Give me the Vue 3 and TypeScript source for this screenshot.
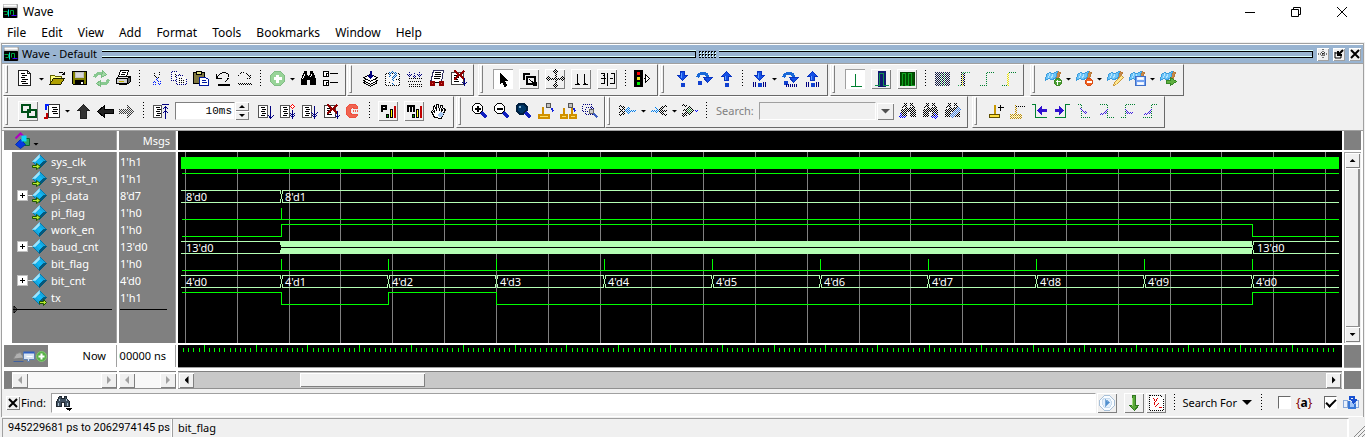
<script setup lang="ts">
import { h, ref } from 'vue'

// d, fill, stroke, stroke width, dash
type Shape = [string, string, string?, number?, string?]
type Kind = 'tool' | 'raised' | 'pressed' | 'arrow' | 'sep' | 'step' | 'search'
interface Item { kind: Kind; icon?: string; label?: string; off?: boolean }
interface Group { gap: string; items: Item[] }

const K = '#000'
const N = 'none'
const NAVY = '#000080'
const BLUE = '#1450e6'
const GREEN = '#008030'

const lens: Shape[] = [
  ['M12 11L17 16', N, '#1020c0', 3],
]
const flag: Shape[] = [
  ['M14 2L17 3L14 12H12Z', '#c88848', '#b87838'],
  ['M3 5L6 3L9 4L14 2L12 9L8 10L5 9L2 11Z', '#6cc4f8', '#3c9cdc'],
  ['M6 4L5 9M9 5L8 9', N, '#b4e4ff'],
]
const arrowDown: Shape[] = [
  ['M8 2H12V6H15L10 11L5 6H8Z', BLUE, '#0a34c0'],
  ['M9 3v5', N, '#60a0ff'],
]
const arrowUp: Shape[] = [
  ['M10 2L15 7H12V11H8V7H5Z', BLUE, '#0a34c0'],
  ['M9 6v4', N, '#60a0ff'],
]
const ball: Shape[] = [['M9 14h2v2h-2Z', '#3c78ff', '#1040d0', 2]]
const hop: Shape[] = [
  ['M3 8C5 2 13 2 13 8', N, '#1868d8', 3],
  ['M9 8H18L13 13Z', BLUE, '#0a34c0'],
  ['M4 12h2v2h-2Z', '#3c78ff', '#1040d0', 2],
]
const bars: Shape[] = [['M4 12v5M6 12v5M14 12v5M16 12v5', N, NAVY]]
const binoc: Shape[] = [
  ['M6 2H8V5L9 7H11L12 5V2H14L17 10V15H12V10H8V15H3V10Z', K, K],
  ['M6 5L4 10M13 5L12 8', N, '#fff'],
]

const icons: Record<string, Shape[]> = {
  doc: [['M2 1H11L14 4V16H2Z', '#fff', '#222'], ['M11 1V4H14', N, '#222'], ['M4 4h4M5 6h5M4 8h4M5 10h6M4 12h5M5 14h6', N, K]],
  folder: [
    ['M3 14V6H7L8 7H14V9', '#ffff80', '#606000'],
    ['M2 15L6 9H17L13 15Z', '#b0a000', '#202000'],
    ['M11 4Q14 1 17 5M17 2V5H14', N, K],
  ],
  save: [['M3 2H17V15H4L3 14Z', '#808000', K], ['M6 3H14V8H6Z', '#d8d8d8', '#c0c0c0'], ['M6 11H14V15H6Z', K, K], ['M12 12v2', N, '#fff', 2]],
  refresh: [
    ['M3 8Q5 3 11 4M17 10Q15 16 9 14', N, '#88c890', 3],
    ['M11 1L15 5L10 8ZM9 11L5 14L9 17Z', '#a0d8a4', '#78bc80'],
  ],
  print: [
    ['M7 1H15L13 7H5Z', '#fff', K], ['M8 3h4M7 5h4', N, K],
    ['M3 9L5 7H16L14 9Z', '#e0e0e0', K], ['M3 9H14V14H3Z', '#d0d0d0', K],
    ['M14 9L17 7V12L14 15', '#606060', K], ['M5 12h5', N, '#c0b000'], ['M5 14h8', N, K, 2],
  ],
  cut: [['M8 2V6L12 11M13 2V6L9 11', N, K], ['M7 12h2v3h-2ZM12 12h2v3h-2Z', N, '#0020ff'], ['M10 8v3', N, '#0020ff', 2]],
  copy: [['M3 2H9L11 4V11H3Z', '#fff', NAVY], ['M8 6H15L18 9V15H8Z', '#fff', NAVY], ['M5 5h3M5 7h3M10 9h4M10 11h6M10 13h6', N, K]],
  paste: [
    ['M3 3H14V14H3Z', '#807840', K], ['M6 2H11V5H6Z', '#e0e080', K],
    ['M9 8H15L18 10V16H9Z', '#fff', '#0018a0'], ['M11 11h4M11 13h5', N, '#0018a0'],
  ],
  undo: [['M4 4V9H9M4 9Q7 3 12 3Q17 4 16 8Q15 11 13 12', N, K], ['M5 15h12', N, K, 2]],
  redo: [['M16 4V9H11M16 9Q13 3 8 3Q3 4 4 8', N, K], ['M3 14h14', N, K, 2]],
  add: [['M7 2H13L17 6V12L13 16H7L3 12V6Z', '#98d498', '#80bc84'], ['M10 5v8M6 9h8', N, '#fff', 3]],
  binoc,
  tree: [['M3 2H8V7H3ZM3 11H8V16H3Z', '#fff', K], ['M5 4h2M6 3v3M5 13h2M6 12v3M9 4h8M9 13h8', N, K]],
  stack: [
    ['M3 11L10 8L17 11L10 15Z', '#fff', K], ['M3 8L10 5L17 8L10 12Z', '#fff', K],
    ['M3 13L10 17L17 13', N, K], ['M10 1V8M8 6L10 8L12 6', N, NAVY, 2],
  ],
  help: [['M3 4H17V16H3Z', '#fff', K], ['M7 7V4Q10 1 13 4V6L10 9V11M10 13v2', N, '#0060c0', 2], ['M5 13h3M13 10h3', N, K]],
  film: [['M3 9H17M3 12H17M3 15H17M3 17H17', N, K], ['M5 2v5M10 2v5M15 2v5M3 5l2 3 2-3M8 5l2 3 2-3M13 5l2 3 2-3', N, NAVY]],
  truck: [
    ['M7 1H17L15 13H4Z', '#fff', '#303060'], ['M8 3h6M8 5h6M7 7h7M7 9h6', N, K],
    ['M4 12h3v3h-3ZM13 12h3v3h-3Z', '#f04040', '#900000', 2], ['M8 13h4', N, K],
  ],
  kill: [['M3 3H15V15H3Z', '#fff', '#444'], ['M5 6h4M5 8h5M5 10h4M5 12h5', N, K], ['M6 1L16 10M16 1L6 10', N, '#900000', 2], ['M16 8v8M14 13l2 2 2-2', N, NAVY]],
  cursor: [['M7 4V14L9 12L11 17L13 16L11 11H14Z', K, K]],
  boxsel: [['M4 10V4H10', N, K, 2], ['M7 7H15V14H7Z', N, K, 2], ['M10 10L17 16M17 12V16H13', N, K]],
  pan: [['M10 1V17M2 9H18M8 3L10 1L12 3M8 15L10 17L12 15M4 7L2 9L4 11M16 7L18 9L16 11', N, K, 2]],
  twocur: [['M6 4V15M13 4V15M3 15H8M11 15H16', N, K], ['M6 13v2M13 13v2', N, K, 2]],
  editw: [['M3 4H7V14H3M3 9H8M10 3V16M13 4H17V14H12M5 6h2M12 9h3', N, K]],
  traffic: [
    ['M2 1H10V17H2Z', K, K], ['M5 3h2v2h-2Z', '#f00', '#f00'], ['M5 8h2v2h-2Z', '#e8e020', '#e8e020'], ['M5 13h2v2h-2Z', '#0e0', '#0e0'],
    ['M13 5V13L17 9Z', '#fff', K], ['M11 9h2', N, K],
  ],
  stepdown: [...arrowDown, ...ball],
  stepover: hop,
  stepup: [...arrowUp, ...ball],
  barsdown: [...arrowDown, ...ball, ...bars],
  barsover: [...hop, ['M5 16h12', N, NAVY, 3, '1 1']],
  barsup: [...arrowUp, ...ball, ...bars],
  wave1: [['M10 4V17M5 17H16', N, GREEN]],
  wave2: [['M7 2H14V17H7Z', '#101870', '#101870'], ['M3 16H8V4H12V16H17', N, '#109050']],
  wave3: [['M3 3H17V16H3Z', '#005000', '#004000'], ['M3 16H5V4H8V16H11V4H14V16H17', N, '#10a020']],
  wavea: [['M3 3H17V16H3Z', '#101840', '#101840'], ['M9 3V16M12 3V16', N, '#20a050']],
  waveb: [['M7 3H10V16H7Z', '#101870', K], ['M3 16H8V3H16', N, '#20a050'], ['M8 4v12', N, '#e0e000', 1]],
  wavec: [['M3 16H10V3H17', N, GREEN]],
  waved: [['M3 16H9M10 3H17', N, GREEN], ['M9 3v13', N, '#f0e800', 2]],
  bmadd: [...flag, ['M13 9H16L18 11V14L16 16H13L11 14V11Z', '#48a030', '#408828'], ['M14 10v5M12 12h5', N, '#fff']],
  bmdel: [...flag, ['M13 9H16L18 11V14L16 16H13L11 14V11Z', '#f06020', '#d84c14'], ['M12 12h5', N, '#fff', 2]],
  bmedit: [...flag, ['M16 6L18 8L11 15L8 16L9 13Z', '#ffe890', '#c89840']],
  bmsave: [...flag, ['M8 7H18V16H8Z', '#70a0f0', '#4070c8'], ['M10 8h6v2h-6ZM10 13h6v2h-6Z', '#fff', '#e8f0ff']],
  bmgo: [...flag, ['M8 11H12V8L18 12L12 16V14H8Z', '#60b040', '#388828']],
  link: [['M3 3H11V10H3Z', N, '#005018', 2], ['M9 8H17V15H9Z', N, '#005018', 2]],
  waveform: [['M6 3H17V16H6Z', '#fff', '#333'], ['M9 6h5M10 8h5M9 10h5M10 12h5', N, K], ['M3 8V3H6', N, '#0020ff', 2], ['M1 16H4V11', N, '#c00000', 2]],
  up: [['M10 3L16 9H13V17H7V9H4Z', '#333', '#222']],
  left: [['M2 10L9 4V8H18V12H9V16Z', '#222', K]],
  right: [['M17 10L10 4V8H2V12H10V16Z', '#444', '#333']],
  top: [['M3 4H11V16H3Z', '#fff', '#555'], ['M5 6h4M6 8h4M5 10h4M6 12h4M5 14h4', N, K], ['M11 3h7M15 4v13M12 8l3-3 3 3M12 12l3-3 3 3', N, NAVY]],
  run: [['M3 4H12V16H3Z', '#fff', '#555'], ['M5 6h4M6 8h4M5 10h4M6 12h4M5 14h4', N, K], ['M15 4v13M13 14l2 3 3-3', N, NAVY]],
  runc: [['M3 4H12V16H3Z', '#fff', '#555'], ['M5 6h4M6 8h4M5 10h4M6 12h4M5 14h4', N, K], ['M15 8v9M13 14l2 2 2-2M13 12l2 2 2-2', N, NAVY], ['M15 3l2 2-2 2-2-2Z', '#fff', '#f00']],
  runall: [['M3 4H12V16H3Z', '#fff', '#555'], ['M5 6h4M6 8h4M5 10h4M6 12h4M5 14h4', N, K], ['M15 4v13M13 14l2 2 2-2M12 11l3 3 3-3', N, NAVY]],
  break: [['M3 4H14V16H3Z', '#fff', '#444'], ['M5 7h4M5 9h5M5 11h4M5 13h5', N, K], ['M6 3L16 12M16 3L6 12', N, '#900000', 2], ['M16 9v8M14 14l2 2 2-2', N, NAVY]],
  stop: [['M6 3H12L14 5V7H11L9 6L7 8V12L9 13H14V14L12 16H6L3 13V6Z', '#f06450', '#f05040'], ['M9 9H14', N, '#f06450', 2, '1 1']],
  perf: [['M3 10V4H7V7H4', N, K, 2], ['M8 13h2v3h-2Z', '#0a0', K], ['M12 8h2v8h-2Z', '#ff0', K], ['M16 5h1v11h-1Z', '#e00000', '#c00000']],
  mem: [['M3 10V4H9V10M6 4V10', N, K, 2], ['M8 13h2v3h-2Z', '#0a0', K], ['M12 8h2v8h-2Z', '#ff0', K], ['M16 5h1v11h-1Z', '#e00000', '#c00000']],
  hand: [
    ['M6 16L3 10L4 9L6 11L5 5L6 4L8 9L8 3L10 3L11 9L12 4L14 4L13 10L15 7L17 8L14 14L13 17Z', '#fff', K],
    ['M11 15L14 11', N, '#a8c8f0', 4],
  ],
  zoomin: [['M6 2H10L13 5V9L10 12H6L3 9V5Z', '#fff', K], ['M5 7h6M8 4v6', N, K, 2], ...lens],
  zoomout: [['M6 2H10L13 5V9L10 12H6L3 9V5Z', '#fff', K], ['M5 7h6', N, K, 2], ...lens],
  zoomfull: [['M6 2H10L13 5V9L10 12H6L3 9V5Z', '#003868', '#002040', 2], ['M5 5h2', N, '#80b0d0', 2], ...lens],
  zoomcur: [['M7 5V12', N, '#d09000', 2], ['M3 13H13V16H3Z', '#ffe060', '#d09000', 2], ['M11 2h4v4h-4Z', '#c0c0c0', '#555'], ['M16 7l2 3', N, '#1020e0', 2]],
  zoomtwo: [['M6 6V12M14 6V12', N, '#d09000', 2], ['M3 13H9V16H3ZM12 13H18V16H12Z', '#ffe060', '#d09000', 2], ['M11 2h4v4h-4Z', '#c0c0c0', '#555'], ['M16 7l2 3', N, '#1020e0', 2]],
  zoomsel: [['M3 3H12V10H3Z', N, NAVY, 1, '1 1'], ['M6 6H14V13H6Z', N, NAVY, 1, '1 1'], ['M10 8h4v4h-4Z', '#ccc', '#666'], ['M14 12l4 4', N, '#4060c0', 2]],
  mergeA: [['M1 4L5 6L7 9L5 12L1 14M1 7l3 2M1 11l3-2', N, K, 2], ['M8 9h9M11 6L8 9l3 3', N, '#0080f0', 2]],
  mergeB: [['M17 4L13 6L10 9L13 12L17 14M10 9h7', N, K, 2], ['M1 9h8M6 6l3 3-3 3', N, '#0080f0', 2]],
  mergeC: [['M2 3L6 5M2 8h4M2 13L6 11M2 15l4-2', N, K, 2], ['M9 5L13 9L9 13L5 9Z', '#208030', K], ['M14 9h3', N, '#00f', 2]],
  findprev: [...binoc, ['M1 15H7M3 12L1 15L3 17', N, '#00f', 2]],
  findnext: [...binoc, ['M10 15H17M14 12L17 15L14 17', N, '#00f', 2]],
  findopt: [...binoc, ['M8 16L17 7', N, '#4080e0', 3]],
  curadd: [['M9 3V12', N, '#c89800', 2], ['M4 13H14V16H4Z', '#ffe040', '#605000'], ['M12 6h6M15 3v6', N, K]],
  curdel: [['M8 3V12M3 13H13V16H3Z', '#ffe040', '#c09000', 2], ['M8 5h9', N, K]],
  prevedge: [['M2 3H6V16H17', N, GREEN], ['M11 9h6', N, '#3010d0', 3], ['M12 5L8 9l4 4Z', '#3010d0', '#3010d0']],
  nextedge: [['M18 3H14V16H3', N, GREEN], ['M3 9h6', N, '#3010d0', 3], ['M8 5l4 4-4 4Z', '#3010d0', '#3010d0']],
  fallprev: [['M3 3H8V16H17', N, GREEN], ['M7 7l3 3 4 2', N, '#4020e0', 2]],
  fallnext: [['M3 3H12V16H18', N, GREEN], ['M12 8l-2 3-5 2', N, '#4020e0', 2]],
  riseprev: [['M3 16H8V3H17', N, GREEN], ['M8 8l2 3 5 1', N, '#4020e0', 2]],
  risenext: [['M3 16H12V3H17', N, GREEN], ['M12 8l-2 3-5 2', N, '#4020e0', 2]],
  app: [['M0 0H14V13H0Z', '#c0c0c0', '#999'], ['M0 4H13V13H0Z', K, K], ['M0 1H13', N, '#fff', 2], ['M0 7H4V10H1M7 10V6H10V11H12', N, '#00a040'], ['M5 5V12', N, '#0dd'], ['M8 11h5', N, '#40f']],
  clear: [['M3 2H14L17 5V17H3Z', '#fff', K, 1, '1 1'], ['M7 5l2 3 2-3M8 8v3M12 10l-4 4M12 14h3', N, '#e00000']],
  go: [['M7 2H12L17 7V12L12 17H7L2 12V7Z', '#f8fcff', '#a8c0d8'], ['M6 5H12L14 8V11L12 14H7L5 11V7Z', '#e4f0fc', '#c8dcf0'], ['M8 6L12 9L8 13Z', '#5090d0', '#78a8d8']],
  down: [['M8 2H11V12H14L10 17L5 12H8Z', '#58a838', '#307820'], ['M8 4v8', N, '#a0d880']],
  find: [
    ['M6 3H8V5H11V3H13V5L16 8V13H11V9H8V13H3V8Z', '#405060', '#202830'],
    ['M6 5v2M13 5v2M5 9v3M14 9v3', N, '#a8c0d0'], ['M13 15h5l-2 2Z', K, K],
  ],
  wrap: [['M2 7H6V14H2ZM14 7H17V14H14Z', '#e8f0fc', '#88a8d8'], ['M7 7V14H13V10', '#a0c4f8', '#3878d8', 2], ['M8 6V3H12V8M10 6l2 3 3-3', N, '#1850d0', 2]],
  shapes: [
    ['M2 6L7 1L10 4', N, '#b000c0', 2], ['M10 6H16V13H10Z', '#30a060', '#106030'],
    ['M2 12L7 7L12 12L7 16Z', '#0838e0', '#0030b0'], ['M9 4h3v4h-3Z', '#10d8f8', '#10d8f8', 2],
  ],
  sig: [['M7 0L14 7L7 14L0 7Z', '#14a8e0', '#0878a8'], ['M7 0L0 7H3L7 3Z', '#a0e4fc', '#80d4f4'], ['M7 14L14 7H11L7 11Z', '#04587c', '#04587c'], ['M7 4L10 7L7 10L4 7Z', '#10b8f4', '#10b0f0']],
  group: [['M2 9L5 4L9 3L12 8', '#b0b0b0', '#888'], ['M2 12H12', N, '#4060a0']],
  note: [['M2 4H13V11H8V13H6V11H2Z', '#d8e4f4', '#6080b0'], ['M2 4H13', N, '#3060c0', 2], ['M5 8h6', N, '#fff']],
  plus: [['M8 3A5 5 0 1 0 8 13A5 5 0 1 0 8 3', '#58b048', '#80c870'], ['M8 5v6M5 8h6', N, '#fff', 2]],
}
icons.sigin = [...icons.sig, ['M0 11H4V9L8 12L4 15V13H0Z', '#b8e830', '#205800']]
icons.sigout = [...icons.sig, ['M7 11H11V9L14 12L11 15V13H7Z', '#b8e830', '#205800']]

const Icon = (props: { name: string; size?: number; off?: boolean }) => {
  const size = props.size ?? 20
  const paths = icons[props.name].map(([d, fill, stroke, width, dash]) =>
    h('path', { d, fill, stroke: stroke ?? 'none', 'stroke-width': width ?? 1, 'stroke-dasharray': dash }))
  return h('svg', { width: size, height: size, viewBox: `0 0 ${size} ${size}`, 'aria-hidden': 'true', 'shape-rendering': size === 20 ? 'crispEdges' : 'auto' }, [
    h('g', { mask: props.off ? 'url(#dither)' : undefined }, [h('g', { transform: 'translate(.5 .5)' }, paths)]),
  ])
}
Icon.props = { name: String, size: Number, off: Boolean }

const t = (icon: string, label: string): Item => ({ kind: 'tool', icon, label })
const x = (icon: string, label: string): Item => ({ kind: 'tool', icon, label, off: true })
const r = (icon: string, label: string, off = false): Item => ({ kind: 'raised', icon, label, off })
const p = (icon: string, label: string): Item => ({ kind: 'pressed', icon, label })
const arrow = (label: string): Item => ({ kind: 'arrow', label })
const sep: Item = { kind: 'sep' }

const toolRows: Group[][] = [
  [
    { gap: 'gap-0', items: [t('doc', 'New'), arrow('New menu'), t('folder', 'Open'), t('save', 'Save'), t('refresh', 'Reload'), t('print', 'Print'), sep, x('cut', 'Cut'), x('copy', 'Copy'), t('paste', 'Paste'), t('undo', 'Undo'), x('redo', 'Redo'), sep, t('add', 'Add'), arrow('Add menu'), t('binoc', 'Find'), t('tree', 'Expand')] },
    { gap: 'gap-1', items: [t('stack', 'Compile'), x('help', 'Compile out of date'), x('film', 'Compile all'), t('truck', 'Simulate'), t('kill', 'End simulation')] },
    { gap: 'gap-4', items: [p('cursor', 'Select mode'), r('boxsel', 'Zoom mode'), r('pan', 'Pan mode', true), r('twocur', 'Two cursor mode'), r('editw', 'Edit mode'), sep, t('traffic', 'Stop drawing')] },
    { gap: 'gap-1', items: [t('stepdown', 'Step into'), t('stepover', 'Step over'), t('stepup', 'Step out'), sep, t('barsdown', 'Step into current'), arrow('Step menu'), t('barsover', 'Step over current'), t('barsup', 'Step out current')] },
    { gap: 'gap-2', items: [p('wave1', 'Single edge'), r('wave2', 'Pulse'), r('wave3', 'Filled'), sep, x('wavea', 'Expand all'), x('waveb', 'Expand at cursor'), x('wavec', 'Collapse all'), x('waved', 'Collapse at cursor')] },
    { gap: 'gap-6', items: [t('bmadd', 'Add bookmark'), arrow('Add bookmark menu'), t('bmdel', 'Delete bookmark'), arrow('Delete bookmark menu'), t('bmedit', 'Manage bookmarks'), t('bmsave', 'Save bookmarks'), arrow('Save bookmarks menu'), t('bmgo', 'Go to bookmark')] },
  ],
  [
    { gap: 'gap-0', items: [r('link', 'Link'), t('waveform', 'Environment'), arrow('Environment menu'), t('up', 'Up'), t('left', 'Back'), x('right', 'Forward'), sep, t('top', 'Restart'), { kind: 'step' }, t('run', 'Run'), t('runc', 'Continue run'), t('runall', 'Run all'), t('break', 'Break'), t('stop', 'Stop'), sep, r('perf', 'Performance profiling'), r('mem', 'Memory profiling'), t('hand', 'Edit breakpoints')] },
    { gap: 'gap-2', items: [t('zoomin', 'Zoom in'), t('zoomout', 'Zoom out'), t('zoomfull', 'Zoom full'), t('zoomcur', 'Zoom on cursor'), t('zoomtwo', 'Zoom between cursors'), t('zoomsel', 'Zoom other')] },
    { gap: 'gap-0', items: [x('mergeA', 'Drivers'), arrow('Drivers menu'), x('mergeB', 'Readers'), arrow('Readers menu'), x('mergeC', 'Expand net'), sep, { kind: 'search' }, x('findprev', 'Search reverse'), x('findnext', 'Search forward'), x('findopt', 'Search options')] },
    { gap: 'gap-4', items: [t('curadd', 'Insert cursor'), x('curdel', 'Delete cursor'), t('prevedge', 'Previous transition'), t('nextedge', 'Next transition'), x('fallprev', 'Previous falling edge'), x('fallnext', 'Next falling edge'), x('riseprev', 'Previous rising edge'), x('risenext', 'Next rising edge')] },
  ],
]

const menus = ['File', 'Edit', 'View', 'Add', 'Format', 'Tools', 'Bookmarks', 'Window', 'Help']
const signals = [
  { name: 'sys_clk', value: "1'h1", icon: 'sigin', bus: false },
  { name: 'sys_rst_n', value: "1'h1", icon: 'sigin', bus: false },
  { name: 'pi_data', value: "8'd7", icon: 'sigin', bus: true },
  { name: 'pi_flag', value: "1'h0", icon: 'sigin', bus: false },
  { name: 'work_en', value: "1'h0", icon: 'sig', bus: false },
  { name: 'baud_cnt', value: "13'd0", icon: 'sig', bus: true },
  { name: 'bit_flag', value: "1'h0", icon: 'sig', bus: false },
  { name: 'bit_cnt', value: "4'd0", icon: 'sig', bus: true },
  { name: 'tx', value: "1'h1", icon: 'sigout', bus: false },
]

interface Box { x: number; y: number; w: number; h: number; c: string }
const WIRE = '#00ff00'
const BUS = '#b4ffb4'
const START = 3
const END = 1161
const boxes: Box[] = []
const hl = (x1: number, x2: number, y: number, c = WIRE) => boxes.push({ x: x1, y, w: x2 - x1, h: 1, c })
const vl = (px: number, y1: number, y2: number, c = WIRE) => boxes.push({ x: px, y: y1, w: 1, h: y2 - y1 + 1, c })
const edges = Array.from({ length: 10 }, (_, i) => Math.floor(103 + (i * 971) / 9))
const first = edges[0]
const last = edges[9]

function bus(top: number, changes: number[]) {
  let from = START
  for (const c of [...changes, END + 2]) {
    hl(from, Math.min(c - 1, END), top, BUS)
    hl(from, Math.min(c - 1, END), top + 12, BUS)
    from = c + 2
  }
  for (const c of changes) {
    for (const side of [c - 1, c + 1]) {
      vl(side, top, top + 3, BUS)
      vl(side, top + 9, top + 12, BUS)
    }
    vl(c, top + 4, top + 8, BUS)
  }
}
boxes.push({ x: START, y: 5, w: END - START, h: 12, c: WIRE })
hl(START + 1, END, 21)
bus(38, [first])
hl(START + 1, END, 67)
vl(first, 56, 67)
hl(START + 1, first, 84)
vl(first, 72, 84)
hl(first, last, 72)
vl(last, 72, 84)
hl(last, END, 84)
bus(89, [first, last])
boxes.push({ x: first, y: 89, w: last - first, h: 13, c: BUS }, { x: first, y: 95, w: last - first, h: 1, c: '#000' })
hl(START + 1, END, 118)
edges.forEach(e => vl(e, 107, 118))
bus(123, edges)
hl(START + 1, first, 140)
vl(first, 140, 152)
hl(first, edges[1], 152)
vl(edges[1], 140, 152)
hl(edges[1], edges[2], 140)
vl(edges[2], 140, 152)
hl(edges[2], last, 152)
vl(last, 140, 152)
hl(last, END, 140)

const gridLines = Array.from({ length: 23 }, (_, i) => 7 + Math.round(i * 51.82))
const labels = [
  { x: 8, y: 49, s: "8'd0" }, { x: first + 4, y: 49, s: "8'd1" },
  { x: 8, y: 100, s: "13'd0" }, { x: last + 5, y: 100, s: "13'd0" },
  { x: 8, y: 134, s: "4'd0" },
  ...edges.map((e, i) => ({ x: e + 4, y: 134, s: `4'd${(i + 1) % 10}` })),
]
const ticks = Array.from({ length: 223 }, (_, i) => ({ x: Math.round(5 + i * 5.18), major: i % 10 === 4 }))

const step = ref('10ms')
const find = ref('')
const exact = ref(false)
const wrap = ref(true)
const view = { start: 9.4, size: 11 }
</script>

<template>
  <div class="window">
    <svg class="defs" width="0" height="0" aria-hidden="true">
      <defs>
        <pattern id="checker" width="2" height="2" patternUnits="userSpaceOnUse">
          <rect width="1" height="1" fill="#fff" /><rect x="1" y="1" width="1" height="1" fill="#fff" />
        </pattern>
        <mask id="dither" maskUnits="userSpaceOnUse" x="0" y="0" width="20" height="20">
          <rect width="20" height="20" fill="url(#checker)" shape-rendering="crispEdges" />
        </mask>
      </defs>
    </svg>

    <header class="titlebar">
      <Icon name="app" :size="15" />
      <span class="title">Wave</span>
      <button class="sys" aria-label="Minimize"><svg width="12" height="12"><path d="M1 6.5H11" stroke="#000" /></svg></button>
      <button class="sys" aria-label="Restore"><svg width="12" height="12"><path d="M1.500 3.500H8.500V10.500H1.500ZM3.500 3.500V1.500H10.500V8.500H8.500" fill="none" stroke="#000" /></svg></button>
      <button class="sys" aria-label="Close"><svg width="12" height="12"><path d="M1 1L11 11M11 1L1 11" stroke="#000" /></svg></button>
    </header>
    <nav class="menu"><button v-for="m in menus" :key="m">{{ m }}</button></nav>

    <main class="dock">
      <div class="dock-title">
        <Icon name="app" :size="15" />
        <span class="dock-name">Wave - Default</span>
        <i class="grip" /><i class="dots" /><i class="grip" />
        <button class="mini" aria-label="Zoom pane"><svg width="12" height="12"><path d="M6 1V11M1 6H11M4 4L8 8M8 4L4 8" stroke="#000" stroke-dasharray="1 1" /></svg></button>
        <button class="mini" aria-label="Undock"><svg width="12" height="12"><path d="M2 5H4M2 4V10H8V8" fill="none" stroke="#000" stroke-width="1" /><path d="M10 2L5 7M5 3V7H9" fill="none" stroke="#000" stroke-width="2" /></svg></button>
        <button class="mini" aria-label="Close pane"><svg width="12" height="12"><path d="M2 2L10 10M10 2L2 10" stroke="#000" stroke-width="2" /></svg></button>
      </div>

      <div class="tools">
        <div v-for="(row, ri) in toolRows" :key="ri" class="tool-row">
          <div v-for="(g, gi) in row" :key="gi" class="group" :class="g.gap" role="toolbar">
            <i class="handle" />
            <template v-for="(it, ii) in g.items" :key="ii">
              <i v-if="it.kind === 'sep'" class="sep" />
              <button v-else-if="it.kind === 'arrow'" class="arrow" :aria-label="it.label"><i class="tri" /></button>
              <div v-else-if="it.kind === 'step'" class="step">
                <input v-model="step" type="text" aria-label="Run length">
                <span class="spin">
                  <button aria-label="Increase"><i class="tri up" /></button>
                  <button aria-label="Decrease"><i class="tri" /></button>
                </span>
              </div>
              <div v-else-if="it.kind === 'search'" class="search">
                <label for="wave-search">Search:</label>
                <input id="wave-search" type="text" disabled>
                <button aria-label="Search history" disabled><i class="tri big" /></button>
              </div>
              <button v-else :class="it.kind" :aria-label="it.label" :title="it.label"><Icon :name="it.icon!" :off="it.off" /></button>
            </template>
          </div>
        </div>
      </div>

      <section class="panes">
        <div class="head"><button class="shape-btn" aria-label="Filter"><Icon name="shapes" :size="18" /><i class="tri" /></button></div>
        <div class="head msgs-head">Msgs</div>
        <div class="black" />
        <div class="gray" />

        <div class="names">
          <ul>
            <li v-for="s in signals" :key="s.name">
              <span class="expand"><button v-if="s.bus" :aria-label="'Expand ' + s.name" /></span>
              <Icon :name="s.icon" :size="16" /><span class="label">{{ s.name }}</span>
            </li>
          </ul>
          <div class="end"><svg width="5" height="7"><path d="M1 0V7L4 3.500Z" fill="none" stroke="#000" /></svg></div>
        </div>
        <div class="values">
          <ul><li v-for="s in signals" :key="s.name">{{ s.value }}</li></ul>
          <div class="end" />
        </div>
        <div class="black">
          <svg class="plot" shape-rendering="crispEdges" role="img" aria-label="Waveforms">
            <rect v-for="gx in gridLines" :key="gx" :x="gx" y="0" width="1" height="100%" fill="#808080" />
            <rect v-for="(b, i) in boxes" :key="'b' + i" :x="b.x" :y="b.y" :width="b.w" :height="b.h" :fill="b.c" />
            <text v-for="(l, i) in labels" :key="'l' + i" :x="l.x" :y="l.y">{{ l.s }}</text>
          </svg>
        </div>
        <div class="vscroll">
          <button aria-label="Scroll up"><i class="tri up" /></button>
          <div class="thumb" />
          <button aria-label="Scroll down"><i class="tri" /></button>
        </div>

        <div class="now"><span class="now-icons"><Icon name="group" :size="14" /><Icon name="note" :size="16" /><Icon name="plus" :size="16" /></span><span>Now</span></div>
        <div class="now-value"><span>000000 ns</span></div>
        <div class="black timeline">
          <svg class="plot" shape-rendering="crispEdges" aria-hidden="true">
            <rect v-for="k in ticks" :key="k.x" :x="k.x" :y="k.major ? 0 : 3" width="1" :height="k.major ? 7 : 4" fill="#00ff00" />
          </svg>
        </div>
        <div class="gray timeline" />

        <div class="hscroll idle first"><button aria-label="Names left" disabled><i class="tri lt" /></button><span class="track" /><button aria-label="Names right" disabled><i class="tri rt" /></button></div>
        <div class="hscroll idle"><button aria-label="Values left" disabled><i class="tri lt" /></button><span class="track" /><button aria-label="Values right" disabled><i class="tri rt" /></button></div>
        <div class="hscroll">
          <button aria-label="Scroll left"><i class="tri lt" /></button>
          <span class="track"><i class="slider" :style="{ marginLeft: view.start + '%', width: view.size + '%' }" /></span>
          <button aria-label="Scroll right"><i class="tri rt" /></button>
        </div>
        <div class="gray" />
      </section>

      <form class="find" @submit.prevent>
        <button type="button" class="x" aria-label="Close find"><svg width="10" height="10"><path d="M1 1L9 9M9 1L1 9" stroke="#000" stroke-width="2" /></svg></button>
        <label for="find">Find:</label>
        <div class="find-box">
          <Icon name="find" />
          <input id="find" v-model="find" type="text">
        </div>
        <button type="button" class="raised go" aria-label="Find next"><Icon name="go" /></button>
        <button type="button" class="raised" aria-label="Search down"><Icon name="down" /></button>
        <button type="button" class="raised" aria-label="Clear"><Icon name="clear" /></button>
        <i class="sep" />
        <button type="button" class="search-for">Search For <i class="tri big" /></button>
        <i class="sep" />
        <label class="check"><input v-model="exact" type="checkbox"><span class="braces">{<b>a</b>}</span></label>
        <label class="check"><input v-model="wrap" type="checkbox" aria-label="Wrap search"><Icon name="wrap" /></label>
      </form>
    </main>

    <footer class="status">
      <span class="range">945229681 ps to 2062974145 ps</span>
      <span class="current">bit_flag</span>
      <svg class="resize" width="12" height="12" aria-hidden="true"><path d="M1 12L12 1M5 12L12 5M9 12L12 9" stroke="#888" /></svg>
    </footer>
  </div>
</template>

<style>
body { background: #f0f0f0; }
</style>

<style scoped>
* { box-sizing: border-box; }
.window { display: flex; flex-direction: column; min-height: 100vh; background: #f0f0f0; color: #000; font: 11px/16px "Noto Sans", "Open Sans", sans-serif; }
.defs { position: absolute; }
button { padding: 0; border: 0; background: none; color: inherit; font: inherit; }
svg { display: block; flex: none; }
i { display: block; flex: none; }
ul { margin: 0; padding: 0; list-style: none; }

.titlebar { display: flex; align-items: center; height: 23px; padding-left: 3px; background: #fff; }
.title { flex: 1; padding-left: 5px; font-size: 12px; }
.sys { display: flex; justify-content: center; align-items: center; width: 46px; height: 22px; }
.menu { display: flex; gap: 15px; height: 19px; padding-left: 7px; background: #fff; font-size: 12px; line-height: 19px; }

.dock { display: flex; flex: 1; flex-direction: column; margin: 1px 1px 0; border: 1px solid #a0a0a0; border-bottom: 0; }
.dock-title { display: flex; align-items: center; height: 20px; padding: 0 2px; border-top: 1px solid #fff; border-bottom: 1px solid #a0a0a0; background: #99b4d1; }
.dock-name { padding: 0 5px 0 3px; }
.grip { flex: 1; height: 7px; border-top: 1px solid #000; border-bottom: 1px solid #000; border-right: 1px solid #000; box-shadow: 0 -1px #d8ffff, inset 0 4px #99b4d1, inset 0 6px #d8ffff; }
.dots { width: 19px; height: 7px; margin: 0 2px; background: repeating-conic-gradient(#000 0 25%, #d8ffff 0 50%, #99b4d1 0 100%) 0 0 / 3px 3px; }
.mini { display: flex; justify-content: center; align-items: center; width: 12px; height: 13px; margin-left: 4px; background: #f0f0f0; box-shadow: inset 1px 1px #fff, inset -1px -1px #a0a0a0; }

.tools { padding-left: 1px; border-bottom: 1px solid #a0a0a0; padding-bottom: 2px; }
.tool-row { display: flex; }
.group { display: flex; align-items: center; height: 32px; padding: 0 4px 2px 1px; border: 1px solid; border-color: #fff #696969 #696969 #fff; }
.gap-1 { margin-left: 1px; }
.gap-2 { margin-left: 2px; }
.gap-4 { margin-left: 4px; }
.gap-6 { margin-left: 6px; }
.handle { width: 3px; height: 28px; margin-right: 7px; border: 1px solid; border-color: #fff #808080 #808080 #fff; }
.sep { width: 1px; height: 18px; margin: 0 5px; background: repeating-linear-gradient(#000 0 1px, transparent 1px 3px); }
.tool { display: flex; justify-content: center; width: 22px; }
.raised, .pressed { display: flex; justify-content: center; width: 20px; height: 20px; margin: 0 3px; box-shadow: inset 1px 1px #fff, inset -1px -1px #808080; }
.pressed { background: #fff; box-shadow: inset 1px 1px #a0a0a0; }
.arrow { display: flex; justify-content: center; width: 9px; }
.tri { width: 6px; height: 3px; background: #000; clip-path: polygon(0 0, 100% 0, 50% 100%); }
.tri.up { clip-path: polygon(0 100%, 100% 100%, 50% 0); }
.tri.big { width: 10px; height: 5px; }
.tri.lt, .tri.rt { width: 4px; height: 8px; }
.tri.lt { clip-path: polygon(100% 0, 100% 100%, 0 50%); }
.tri.rt { clip-path: polygon(0 0, 0 100%, 100% 50%); }
.step { display: flex; margin: 0 5px 0 4px; }
.step input { width: 60px; height: 18px; padding: 0 2px; border: 1px solid; border-color: #808080 #f0f0f0 #f0f0f0 #808080; background: #fff; font: 11px "Liberation Mono", monospace; text-align: right; }
.spin { display: flex; flex-direction: column; width: 14px; }
.spin button { display: flex; justify-content: center; align-items: center; height: 9px; box-shadow: inset 1px 1px #fff, inset -1px -1px #808080; }
.search { display: flex; align-items: center; padding-right: 3px; color: #808080; }
.search label { width: 47px; padding-left: 4px; }
.search input { width: 117px; height: 18px; border: 1px solid; border-color: #a0a0a0 #fff #fff #a0a0a0; background: #f0f0f0; }
.search button { display: flex; justify-content: center; align-items: center; width: 17px; height: 17px; margin-left: 1px; box-shadow: inset 1px 1px #fff, inset -1px -1px #808080; }
.search .tri { background: #505050; }

.panes { display: grid; flex: 1; grid-template-columns: 113px 57px minmax(0, 1fr) 17px; grid-template-rows: 19px minmax(190px, 1fr) 24px 18px; gap: 2px; padding: 0 2px; background: #fff; }
.head, .gray { background: #808080; }
.black { overflow: hidden; background: #000; }
.head { border-right: 1px solid #a0a0a0; }
.shape-btn { display: flex; align-items: center; gap: 2px; height: 19px; padding-left: 9px; }
.shape-btn .tri { margin-top: 7px; }
.msgs-head { padding-right: 5px; color: #fff; line-height: 20px; text-align: right; }
.names, .values { overflow: hidden; background: #808080; color: #fff; border-right: 1px solid #a0a0a0; }
.names { padding-top: 1px; border-left: 8px solid #fff; }
.values { padding: 1px 4px 0 1px; }
.names li, .values li { display: flex; align-items: center; height: 17px; line-height: 17px; white-space: nowrap; }
.expand { display: flex; justify-content: flex-end; align-items: center; width: 20px; height: 17px; }
.expand button { width: 9px; height: 9px; background: linear-gradient(#000, #000) center / 5px 1px no-repeat, linear-gradient(#000, #000) center / 1px 5px no-repeat, #fff; box-shadow: 0 0 0 1px #c0c0c0; }
.expand:has(button) { justify-content: flex-start; padding-left: 6px; background: linear-gradient(#e0e0e0, #e0e0e0) 15px 8px / 5px 1px no-repeat; }
.names li .label { padding-left: 3px; }
.end { height: 7px; margin-right: 4px; background: linear-gradient(#000, #000) 0 3px / 100% 1px no-repeat; }
.names .end { margin-left: 1px; }
.plot { width: 100%; height: 100%; }
.plot text { fill: #fff; font-size: 11px; }
.vscroll { display: flex; flex-direction: column; padding: 1px; background: #f0f0f0; box-shadow: inset 1px 1px #a0a0a0; }
.vscroll button, .hscroll button { display: flex; justify-content: center; align-items: center; width: 15px; height: 15px; background: #f0f0f0; box-shadow: inset 1px 1px #fff, inset -1px -1px #808080; }
.thumb { flex: 1; background: #f0f0f0; box-shadow: inset 1px 1px #fff, inset -2px -1px #909090; }
.now, .now-value { display: flex; align-items: center; height: 22px; background: #fff; }
.now { justify-content: space-between; padding-right: 10px; border-right: 1px solid #a0a0a0; }
.now-icons { display: flex; align-items: center; width: 44px; height: 22px; overflow: hidden; padding-left: 7px; background: #808080; }
.now-icons svg { margin-right: -4px; }
.now-value { justify-content: flex-end; overflow: hidden; padding-right: 9px; border-right: 1px solid #a0a0a0; white-space: nowrap; }
.timeline { height: 22px; box-shadow: 0 1px #a0a0a0; }
.hscroll { display: flex; align-items: center; padding: 1px; border-top: 1px solid #808080; border-bottom: 1px solid #909090; background: #c8c8c8; }
.hscroll .track { flex: 1; height: 14px; }
.hscroll .slider { height: 14px; background: #f0f0f0; box-shadow: inset 1px 1px #fff, inset -1px -1px #808080; }
.idle { padding: 1px 0; background: #f8f8f8; }
.idle.first { border-left: 8px solid #808080; }
.idle button { width: 16px; }
.idle .tri { background: #a0a0a0; }

.find { display: flex; align-items: center; height: 28px; padding-left: 4px; border-bottom: 1px solid #fff; }
.x { display: flex; justify-content: center; align-items: center; width: 14px; height: 14px; margin-right: 1px; box-shadow: inset 1px 1px #fff, inset -1px -1px #808080; }
.find > label[for] { width: 30px; }
.find-box { display: flex; flex: 1; align-items: center; height: 20px; padding-left: 1px; border: 1px solid; border-color: #a0a0a0 #fff #fff #a0a0a0; background: #fff; }
.find-box input { flex: 1; border: 0; outline: 0; background: none; font: inherit; }
.find .raised { margin: 0 1px; }
.find .go { margin-right: 6px; }
.find .raised + .sep { margin-left: 7px; }
.search-for { display: flex; align-items: center; gap: 5px; padding: 0 4px 0 2px; }
.check { display: flex; align-items: center; gap: 5px; }
.check:last-child { gap: 4px; width: 37px; margin: 0 2px 0 12px; }
.check input { flex: none; width: 13px; height: 13px; margin: 0; appearance: none; border: 1px solid; border-color: #696969 #fff #fff #696969; background: #fff; }
.check input:checked::after { display: block; width: 8px; height: 4px; margin: 2px 1px; border: solid #000; border-width: 0 0 2px 2px; content: ""; transform: rotate(-45deg); }
.find .sep + .check { margin-left: 11px; }
.braces { width: 16px; color: #800000; font-size: 12px; }
.braces b { color: #000; }

.status { display: flex; height: 20px; padding-left: 2px; border-top: 1px solid #f0f0f0; line-height: 18px; }
.range, .current { padding-left: 5px; border: 1px solid #a0a0a0; border-width: 1px 0 0 1px; box-shadow: inset -1px 0 #fff; }
.range { width: 170px; font-family: Roboto, sans-serif; white-space: nowrap; }
.current { flex: 1; border-right: 1px solid #fff; }
.resize { align-self: flex-end; margin-left: 4px; }
</style>
